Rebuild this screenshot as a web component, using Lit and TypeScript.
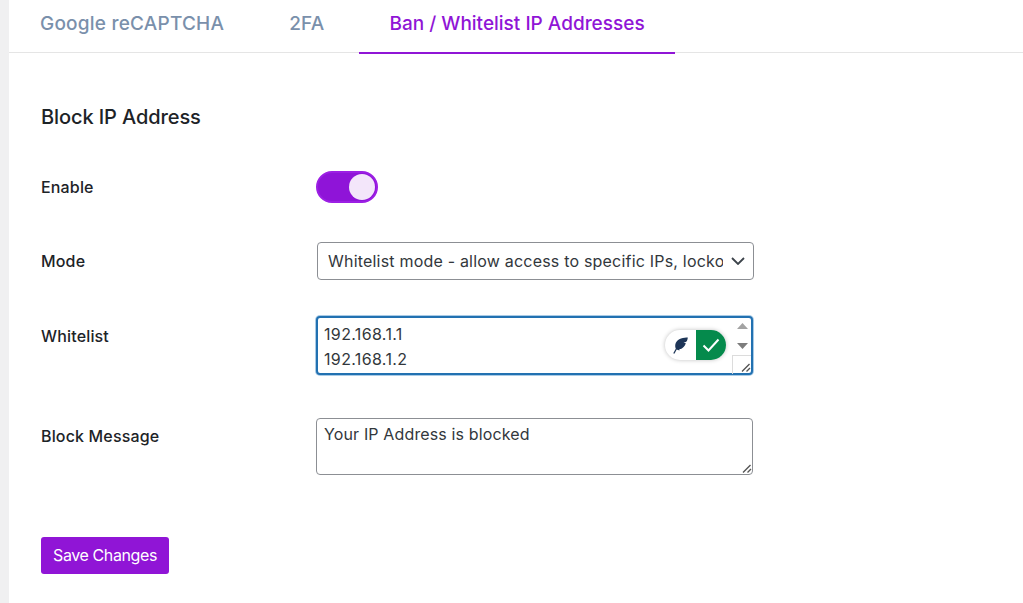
import { LitElement, html, css } from "lit";
import { customElement } from "lit/decorators.js";

@customElement("app-root")
export class AppRoot extends LitElement {
  static styles = css`
    :host { display: block; height: 603px; overflow: hidden; background: #fff; font-family: Inter, "Liberation Sans", sans-serif; color: #1d2327; }
    .page { display: flex; height: 603px; }
    .strip { width: 9px; flex: none; background: #f0f0f1; }
    .main { flex: 1; min-width: 0; }
    .tabs { display: flex; gap: 5px; height: 52px; border-bottom: 1px solid #e5e5e5; padding-left: 1px; box-sizing: content-box; }
    .tab { padding: 0 30px; height: 53px; box-sizing: border-box; display: flex; align-items: center; padding-bottom: 7px; font-size: 19px; font-weight: 500; letter-spacing: 0.22px; color: #7a90ab; white-space: nowrap; }
    .tab.active { color: #9015d6; border-bottom: 2px solid #9015d6; padding-bottom: 5px; height: 54px; letter-spacing: 0; }
    .content { padding: 52px 0 0 32px; }
    h2 { margin: 0 0 42px; font-size: 20px; line-height: 24px; font-weight: 500; letter-spacing: -0.1px; color: #1d2327; }
    .row { display: grid; grid-template-columns: 275px 438px; align-items: start; }
    .label { font-size: 16px; font-weight: 500; letter-spacing: 0.16px; line-height: 20px; color: #1d2327; }
    .r-enable { height: 71px; }
    .r-enable .label { padding-top: 6px; }
    .toggle { width: 62px; height: 32px; box-sizing: border-box; border-radius: 16px; background: #8f14d8; border: 2px solid #9c1fe4; position: relative; }
    .knob { position: absolute; right: 1px; top: 1px; width: 26px; height: 26px; border-radius: 50%; background: #f3e6fa; }
    .r-mode { height: 74px; }
    .r-mode .label { padding-top: 9px; }
    .selectbox { margin-left: 1px; width: 437px; height: 38px; box-sizing: border-box; border: 1px solid #8c8f94; border-radius: 4px; display: flex; align-items: center; padding: 0 8px 0 10px; gap: 8px; }
    .seltext { flex: 1; min-width: 0; overflow: hidden; white-space: nowrap; font-size: 16px; letter-spacing: 0.2px; color: #32373c; }
    .r-white { height: 102px; }
    .r-white .label { padding-top: 10px; }
    .tawrap { position: relative; width: 438px; }
    textarea { display: block; width: 437px; margin: 0; box-sizing: border-box; font: inherit; font-size: 16px; letter-spacing: 0.14px; line-height: 25px; color: #32373c; background: #fff; padding: 4px 7px; border: 1px solid #8c8f94; border-radius: 4px; outline: none; overflow: hidden; resize: none; }
    .focus { height: 59px; border: 2px solid #2271b1; box-shadow: 0 0 0 1px #a9cbe6; padding: 4px 6px; letter-spacing: 0.35px; }
    .plain { height: 57px; line-height: 24px; padding-top: 3px; }
    .r-block { height: 119px; }
    .r-block .label { padding-top: 8px; }
    .scroll { position: absolute; right: 3px; top: 2px; width: 17px; height: 54px; display: flex; flex-direction: column; align-items: center; }
    .up { margin-top: 5px; }
    .down { margin-top: 14px; }
    .corner { position: absolute; right: 3px; bottom: 1px; width: 19px; height: 19px; box-sizing: border-box; border: 1px solid #dcdcdc; border-right: 0; border-bottom: 0; }
    .grip { position: absolute; right: 3px; bottom: 3px; }
    .grip2 { position: absolute; right: 2px; bottom: 2px; }
    .lt { position: absolute; left: 349px; top: 14px; width: 61px; height: 30px; display: flex; border-radius: 15px; overflow: hidden; box-shadow: 0 0 4px rgba(0,0,0,.25); background: #fff; }
    .lt-l { width: 31px; display: flex; align-items: center; justify-content: center; }
    .lt-r { flex: 1; background: #058a4c; display: flex; align-items: center; justify-content: center; }
    .btn { display: inline-flex; align-items: center; height: 37px; width: 128px; justify-content: center; box-sizing: border-box; border-radius: 3px; background: #9015d6; color: #fff; font-size: 16px; letter-spacing: -0.4px; font-weight: 400; padding-bottom: 2px; }
  `;

  render() {
    return html`
      <div class="page">
        <div class="strip"></div>
        <div class="main">
          <div class="tabs">
            <div class="tab">Google reCAPTCHA</div>
            <div class="tab">2FA</div>
            <div class="tab active">Ban / Whitelist IP Addresses</div>
          </div>
          <div class="content">
            <h2>Block IP Address</h2>
            <div class="row r-enable">
              <div class="label">Enable</div>
              <div class="toggle"><div class="knob"></div></div>
            </div>
            <div class="row r-mode">
              <div class="label">Mode</div>
              <div class="selectbox">
                <div class="seltext">Whitelist mode - allow access to specific IPs, lockout all others</div>
                <svg width="14" height="8" viewBox="0 0 14 8" fill="none"><path d="M1 1l6 6 6-6" stroke="#3c434a" stroke-width="1.8"/></svg>
              </div>
            </div>
            <div class="row r-white">
              <div class="label">Whitelist</div>
              <div class="tawrap">
                <textarea class="focus" .value=${"192.168.1.1\n192.168.1.2"}></textarea>
                <div class="scroll">
                  <svg class="up" width="11" height="6" viewBox="0 0 11 6"><path d="M5.500 0l5.500 6H0z" fill="#a3a3a3"/></svg>
                  <svg class="down" width="11" height="6" viewBox="0 0 11 6"><path d="M5.500 6L0 0h11z" fill="#7d7d7d"/></svg>
                </div>
                <div class="corner"></div>
                <svg class="grip" width="10" height="10" viewBox="0 0 10 10" fill="none"><path d="M1 9.500L8.500 2M5.500 9.500L9 6" stroke="#555" stroke-width="1.400"/></svg>
                <div class="lt">
                  <div class="lt-l">
                    <svg width="15" height="17" viewBox="0 0 15 17"><path d="M3 12C1 8 3 3 8 1.500 10.500.7 13 .5 14.800.5c-.2 2-.8 3.500-1.800 4.500l-2.500.5 2.300.7C12 9 10 11 8 12L6 12l1 1c-1.500.5-3 0-4-1z" fill="#1d3557"/><path d="M.8 16.500L5 9" stroke="#1d3557" stroke-width="1.300" fill="none"/></svg>
                  </div>
                  <div class="lt-r">
                    <svg width="18" height="14" viewBox="0 0 18 14" fill="none"><path d="M1.500 7.500l5 5L16.500 1.500" stroke="#fff" stroke-width="2"/></svg>
                  </div>
                </div>
              </div>
            </div>
            <div class="row r-block">
              <div class="label">Block Message</div>
              <div class="tawrap">
                <textarea class="plain" .value=${"Your IP Address is blocked"}></textarea>
                <svg class="grip2" width="10" height="10" viewBox="0 0 10 10" fill="none"><path d="M1 9.500L8.500 2M5.500 9.500L9 6" stroke="#555" stroke-width="1.400"/></svg>
              </div>
            </div>
            <div class="btn">Save Changes</div>
          </div>
        </div>
      </div>
    `;
  }
}
